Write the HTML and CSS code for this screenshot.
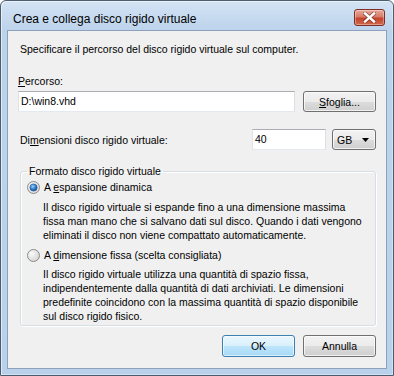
FILE: index.html
```html
<!DOCTYPE html>
<html lang="it">
<head>
<meta charset="utf-8">
<title>Crea e collega disco rigido virtuale</title>
<link rel="stylesheet" href="styles.css">
</head>
<body>
<div class="window">
  <div class="titlebar">
    <span class="title">Crea e collega disco rigido virtuale</span>
    <div class="close" aria-label="Chiudi">
      <svg width="13" height="11" viewBox="0 0 13 11">
        <path d="M2 1.5 L11 9.5 M11 1.5 L2 9.5" stroke="#5a2018" stroke-width="4" stroke-linecap="square" fill="none" opacity="0.55"/>
        <path d="M2 1.5 L11 9.5 M11 1.5 L2 9.5" stroke="#ffffff" stroke-width="2.4" stroke-linecap="square" fill="none"/>
      </svg>
    </div>
  </div>
  <div class="client">
    <p class="intro">Specificare il percorso del disco rigido virtuale sul computer.</p>
    <div class="path-label"><u>P</u>ercorso:</div>
    <div class="path-row">
      <div class="textbox path">D:\win8.vhd</div>
      <div class="btn browse"><span><u>S</u>foglia...</span></div>
    </div>
    <div class="size-row">
      <span class="size-label">Di<u>m</u>ensioni disco rigido virtuale:</span>
      <div class="textbox size">40</div>
      <div class="combo">
        <span>GB</span>
        <svg width="7" height="4" viewBox="0 0 7 4"><path d="M0 0 H7 L3.5 4 Z" fill="#000"/></svg>
      </div>
    </div>
    <fieldset class="group">
      <legend>Formato disco rigido virtuale</legend>
      <div class="option first">
        <svg class="radio" width="13" height="13" viewBox="0 0 13 13">
          <defs>
            <radialGradient id="rbg" cx="0.35" cy="0.35" r="0.8">
              <stop offset="0" stop-color="#fafafa"/>
              <stop offset="1" stop-color="#d4d4d4"/>
            </radialGradient>
            <radialGradient id="dot" cx="0.4" cy="0.35" r="0.75">
              <stop offset="0" stop-color="#9cd4fb"/>
              <stop offset="0.45" stop-color="#3a8ad6"/>
              <stop offset="1" stop-color="#0e3f7a"/>
            </radialGradient>
          </defs>
          <circle cx="6.5" cy="6.5" r="6" fill="url(#rbg)" stroke="#8a8a8a"/>
          <circle cx="6.5" cy="6.5" r="3.6" fill="url(#dot)" stroke="#1c4f86" stroke-width="0.6"/>
        </svg>
        <span>A <u>e</u>spansione dinamica</span>
      </div>
      <p class="desc first-desc">Il disco rigido virtuale si espande fino a una dimensione massima<br>fissa man mano che si salvano dati sul disco. Quando i dati vengono<br>eliminati il disco non viene compattato automaticamente.</p>
      <div class="option second">
        <svg class="radio" width="13" height="13" viewBox="0 0 13 13">
          <defs>
            <radialGradient id="rbg2" cx="0.35" cy="0.35" r="0.8">
              <stop offset="0" stop-color="#fafafa"/>
              <stop offset="1" stop-color="#cfcfcf"/>
            </radialGradient>
          </defs>
          <circle cx="6.5" cy="6.5" r="6" fill="url(#rbg2)" stroke="#8a8a8a"/>
        </svg>
        <span>A <u>d</u>imensione fissa (scelta consigliata)</span>
      </div>
      <p class="desc second-desc">Il disco rigido virtuale utilizza una quantità di spazio fissa,<br>indipendentemente dalla quantità di dati archiviati. Le dimensioni<br>predefinite coincidono con la massima quantità di spazio disponibile<br>sul disco rigido fisico.</p>
    </fieldset>
    <div class="actions">
      <div class="btn default"><span>OK</span></div>
      <div class="btn"><span>Annulla</span></div>
    </div>
  </div>
</div>
</body>
</html>
```
FILE: styles.css
```css
html, body {
  margin: 0;
  padding: 0;
  background: #ffffff;
}

body {
  font-family: "Liberation Sans", Arial, sans-serif;
  font-size: 10.5px;
  color: #000;
}

.window {
  width: 394px;
  height: 376px;
  box-sizing: border-box;
  border: 1px solid #4d5d70;
  border-radius: 6px 6px 0 0;
  background: linear-gradient(#d3e3f4 0, #bcd3ec 30px, #b9d1ea 100%);
  box-shadow: inset 1px 1px 0 rgba(255,255,255,0.55), inset -1px -1px 0 rgba(255,255,255,0.35);
  display: flex;
  flex-direction: column;
}

.titlebar {
  height: 29px;
  flex: none;
  display: flex;
  align-items: flex-start;
  justify-content: space-between;
  padding: 0 8px 0 12px;
  box-sizing: border-box;
}

.title {
  font-size: 12px;
  line-height: 14px;
  margin-top: 11px;
  color: #000;
}

.close {
  width: 31px;
  height: 17px;
  margin-top: 8px;
  box-sizing: border-box;
  border: 1px solid #7e2e24;
  border-radius: 3px;
  background: linear-gradient(#e9a99c 0, #d87b69 45%, #c4432e 55%, #cf6a4c 100%);
  box-shadow: inset 0 0 0 1px rgba(255,255,255,0.35);
  display: flex;
  align-items: center;
  justify-content: center;
}

.client {
  flex: 1;
  margin: 0 6px 6px 6px;
  border: 1px solid #8da2ba;
  background: #f0f0f0;
  padding: 11px 10px 0 10px;
  box-sizing: border-box;
  line-height: 14px;
}

.intro {
  margin: 0 0 0 2px;
  line-height: 15px;
}

.path-label {
  margin-top: 17px;
  line-height: 15px;
}

.path-row {
  display: flex;
  gap: 8px;
  margin-top: 2px;
}

.textbox {
  height: 21px;
  box-sizing: border-box;
  background: #fff;
  border: 1px solid #abadb3;
  border-left-color: #e2e3ea;
  border-right-color: #dbdfe6;
  border-bottom-color: #e3e9ef;
  padding: 0 2px;
  line-height: 19px;
}

.path {
  flex: 1;
}

.btn {
  width: 73px;
  height: 22px;
  box-sizing: border-box;
  border: 1px solid #707070;
  border-radius: 3px;
  background: linear-gradient(#f2f2f2 0, #ebebeb 50%, #dddddd 50%, #cfcfcf 100%);
  box-shadow: inset 0 0 0 1px rgba(255,255,255,0.7);
  display: flex;
  align-items: center;
  justify-content: center;
  line-height: 14px;
}

.browse {
  flex: none;
  height: 21px;
}

.size-row {
  display: flex;
  align-items: center;
  margin-top: 17px;
}

.size-label {
  margin-left: 2px;
  flex: 1;
}

.size {
  width: 74px;
}

.combo {
  width: 44px;
  height: 21px;
  margin-left: 6px;
  box-sizing: border-box;
  border: 1px solid #707070;
  border-radius: 3px;
  background: linear-gradient(#f2f2f2 0, #ebebeb 50%, #dddddd 50%, #cfcfcf 100%);
  box-shadow: inset 0 0 0 1px rgba(255,255,255,0.7);
  display: flex;
  align-items: center;
  justify-content: space-between;
  padding: 0 6px 0 4px;
}

.group {
  margin: 14px 0 0 2px;
  padding: 0 0 2px 0;
  min-width: 0;
  border: 1px solid #d5dfe5;
  border-radius: 3px;
  box-shadow: inset 1px 1px 0 #fff, 1px 1px 0 #fff;
}

.group legend {
  margin-left: 6px;
  padding: 0 2px;
  line-height: 15px;
}

.option {
  display: flex;
  align-items: center;
  gap: 4px;
  margin-left: 6px;
  line-height: 14px;
}

.option.first {
  margin-top: 1px;
}

.option.second {
  margin-top: 6px;
}

.radio {
  flex: none;
}

.desc {
  margin: 5px 0 0 22px;
  white-space: nowrap;
  line-height: 14px;
}

.desc.first-desc {
  margin-top: 6px;
}

.actions {
  display: flex;
  justify-content: flex-end;
  gap: 8px;
  margin-top: 9px;
}

.btn.default {
  border-color: #3c7fb1;
  background: linear-gradient(#eaf6fd 0, #d9f0fc 50%, #bee6fd 50%, #a7d9f5 100%);
  box-shadow: inset 0 0 0 1px rgba(255,255,255,0.6);
}
```
